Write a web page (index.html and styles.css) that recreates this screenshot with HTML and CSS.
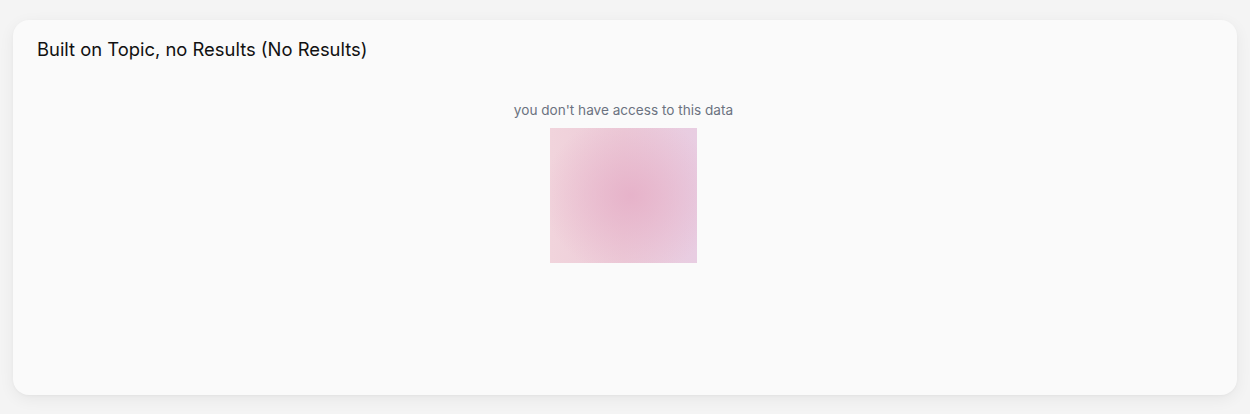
FILE: index.html
```html
<!DOCTYPE html>
<html>
<head>
<meta charset="utf-8">
<link rel="stylesheet" href="styles.css">
</head>
<body>
<div class="card">
  <h2 class="title">Built on Topic, no Results (No Results)</h2>
  <div class="content">
    <p class="msg">you don't have access to this data</p>
    <div class="blur"></div>
  </div>
</div>
</body>
</html>
```
FILE: styles.css
```css
html, body {
  margin: 0;
  padding: 0;
  background: #f4f4f4;
  font-family: Inter, "Noto Sans", sans-serif;
}
body {
  padding: 20px 13px 19px 13px;
}
.card {
  background: #fafafa;
  border-radius: 16px;
  height: 375px;
  box-sizing: border-box;
  padding: 17px 24px 0 24px;
  box-shadow: 0 4px 16px rgba(0,0,0,0.06), 0 1px 3px rgba(0,0,0,0.03);
}
.title {
  margin: 0;
  font-size: 18.4px;
  font-weight: 400;
  line-height: 24px;
  color: #111;
}
.content {
  display: flex;
  flex-direction: column;
  align-items: center;
  margin-top: 40px;
  padding-right: 3px;
}
.msg {
  margin: 0;
  font-size: 13.6px;
  line-height: 18px;
  color: #6b7280;
}
.blur {
  margin-top: 9px;
  width: 147px;
  height: 135px;
  background:
    radial-gradient(ellipse 60% 60% at 55% 50%, rgba(230,176,200,0.9), rgba(230,176,200,0) 100%),
    linear-gradient(90deg, #f1d4dc 0%, #eccbd8 50%, #e8cde2 100%);
}
```
